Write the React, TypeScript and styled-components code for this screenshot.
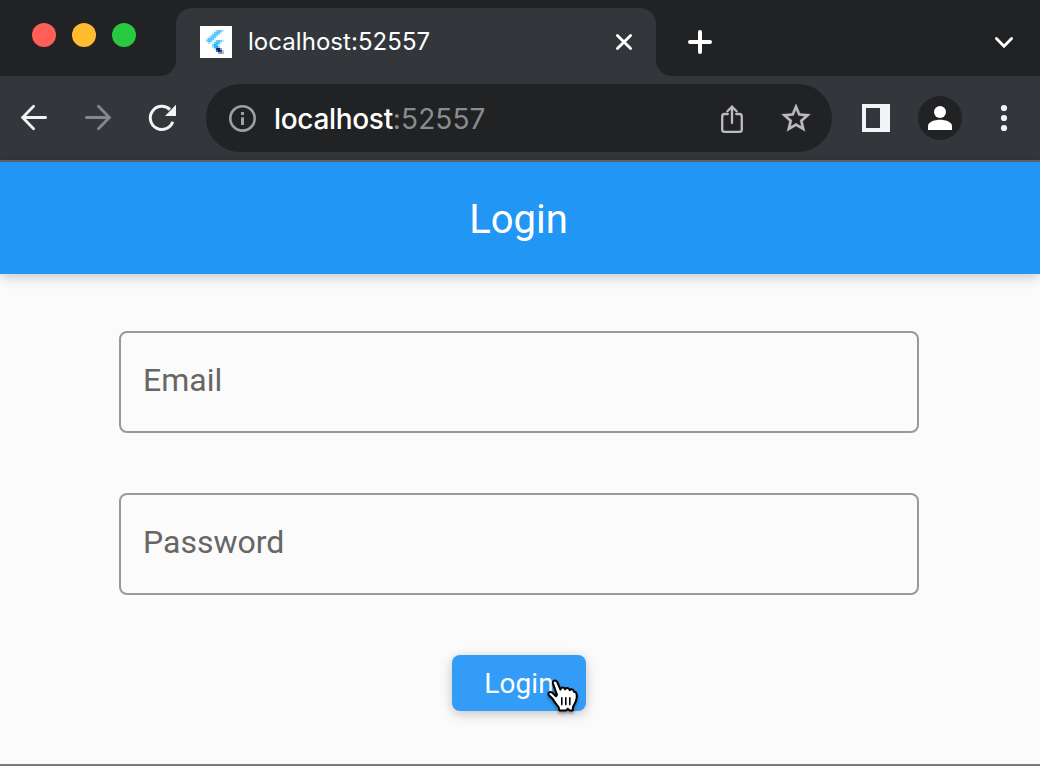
import React from 'react';
import styled, { createGlobalStyle } from 'styled-components';

const GlobalStyle = createGlobalStyle`
  * { box-sizing: border-box; }
  html, body { margin: 0; padding: 0; overflow: hidden; }
  body { background: #fbfbfb; }
`;

const Window = styled.div`
  width: 1040px;
  height: 766px;
  display: flex;
  flex-direction: column;
  overflow: hidden;
  background: #fbfbfb;
  border-bottom: 2px solid #7a7a7a;
`;

const TabStrip = styled.header`
  height: 76px;
  flex: none;
  display: flex;
  align-items: flex-start;
  background: #212224;
`;

const TrafficLights = styled.div`
  width: 160px;
  padding: 23px 0 0 32px;
  display: flex;
  gap: 16px;
`;

const Light = styled.span<{ $color: string }>`
  width: 24px;
  height: 24px;
  border-radius: 50%;
  background: ${(p) => p.$color};
`;

const TabFlare = styled.span<{ $side: 'left' | 'right' }>`
  width: 16px;
  height: 16px;
  align-self: flex-end;
  background: radial-gradient(
    circle at ${(p) => (p.$side === 'left' ? '0 0' : '100% 0')},
    #212224 15.5px,
    #33363a 16.5px
  );
`;

const Tab = styled.div`
  width: 480px;
  height: 68px;
  margin-top: 8px;
  padding: 0 20px 0 24px;
  display: flex;
  align-items: center;
  border-radius: 16px 16px 0 0;
  background: #33363a;
`;

const TabTitle = styled.span`
  flex: 1;
  margin-left: 16px;
  font: 400 24px/32px Inter, sans-serif;
  letter-spacing: 0.05px;
  color: #fff;
`;

const NewTab = styled.div`
  flex: 1;
  padding: 30px 0 0 16px;
`;

const TabSearch = styled.div`
  padding: 30px 24px 0 0;
`;

const Toolbar = styled.div`
  height: 86px;
  flex: none;
  display: flex;
  align-items: center;
  padding: 0 20px 0 16px;
  background: #33363a;
  border-bottom: 2px solid #646464;
`;

const NavButtons = styled.div`
  width: 190px;
  display: flex;
  gap: 28px;
`;

const AddressBar = styled.div`
  width: 626px;
  height: 68px;
  padding: 0 20px;
  display: flex;
  align-items: center;
  border-radius: 34px;
  background: #212224;
`;

const Url = styled.span`
  flex: 1;
  margin: 1px 0 0 16px;
  font: 500 28px/36px Inter, sans-serif;
  letter-spacing: -0.32px;
  color: #fff;
`;

const Port = styled.span`
  font-weight: 400;
  letter-spacing: 0.1px;
  color: #8b8c8e;
`;

const AddressActions = styled.div`
  display: flex;
  gap: 32px;
`;

const ToolbarActions = styled.div`
  flex: 1;
  display: flex;
  align-items: center;
  justify-content: space-between;
  padding-left: 28px;
`;

const Avatar = styled.div`
  width: 44px;
  height: 44px;
  margin: 0 14px;
  display: grid;
  place-items: center;
  border-radius: 50%;
  background: #212224;
`;

const Icon = styled.svg`
  display: block;
  flex: none;
  fill: none;
`;

const AppBar = styled.div`
  height: 112px;
  flex: none;
  display: flex;
  align-items: center;
  justify-content: center;
  background: #2196f5;
  box-shadow: 0 2px 10px rgba(0, 0, 0, 0.12), 0 4px 14px rgba(0, 0, 0, 0.1);
`;

const AppTitle = styled.h1`
  margin: 4px 3px 0 0;
  font: 400 40px/48px Roboto, sans-serif;
  letter-spacing: 0;
  color: #fff;
`;

const Form = styled.form`
  flex: 1;
  display: flex;
  flex-direction: column;
  align-items: center;
  gap: 60px;
  padding: 57px 2px 0 0;
`;

const Field = styled.label`
  width: 800px;
  height: 102px;
  padding: 0 22px;
  display: flex;
  align-items: center;
  border: 2px solid #999;
  border-radius: 8px;
  font: 400 32px/40px Roboto, sans-serif;
  letter-spacing: 0;
  color: #666;
`;

const FieldText = styled.span`
  margin-bottom: 4px;
`;

const SubmitButton = styled.button`
  position: relative;
  width: 134px;
  height: 56px;
  padding: 1px 0 0;
  border: 0;
  border-radius: 8px;
  background: #339cf6;
  color: #fff;
  font: 400 28px/56px Roboto, sans-serif;
  letter-spacing: 0.1px;
  box-shadow: 0 2px 10px rgba(0, 0, 0, 0.14), 0 4px 16px rgba(0, 0, 0, 0.1);
`;

const Pointer = styled(Icon)`
  position: absolute;
  left: 92px;
  top: 19px;
  filter: drop-shadow(0 2px 1.5px rgba(0, 0, 0, 0.35));
`;

/* 16x16 favicon: [row, first column, colours of consecutive cells] */
const faviconCells: [number, number, string[]][] = [
  [2, 7, ['#d8f1fd', '#84d4fa', '#54c5f8', '#6bcdf9', '#c8ecfd']],
  [3, 6, ['#d8f1fd', '#6bcdf9', '#54c5f8', '#54c5f8', '#c8ecfd']],
  [4, 5, ['#d8f1fd', '#6bcdf9', '#54c5f8', '#6bcdf9', '#d8f1fd']],
  [5, 4, ['#d8f1fd', '#6bcdf9', '#54c5f8', '#6bcdf9', '#d8f1fd']],
  [6, 3, ['#b4e5fc', '#54c5f8', '#54c5f8', '#6bcdf9', '#d8f1fd']],
  [7, 3, ['#84d4fa', '#54c5f8', '#6bcdf9', '#d8f1fd', '#d8f1fd', '#6bcdf9', '#54c5f8', '#6bcdf9', '#c8ecfd']],
  [8, 4, ['#a9e0fb', '#d8f1fd', '#e8f7fe', '#6bcdf9', '#42bff6', '#54c5f8', '#d8f1fd']],
  [9, 6, ['#84d4fa', '#29b6f6', '#42bff6', '#c8ecfd']],
  [10, 6, ['#a9e0fb', '#29b6f6', '#29a6e0', '#a8cfe8']],
  [11, 7, ['#a9e0fb', '#063a7c', '#02216b', '#8da2c4']],
  [12, 8, ['#506d9f', '#02206a', '#2a4580', '#c3cbdb']],
  [13, 9, ['#a3adc0', '#7f90b2', '#b0bacd']],
];

const Favicon = () => (
  <Icon width="32" height="32" viewBox="0 0 16 16" shapeRendering="crispEdges">
    <rect width="16" height="16" fill="#fff" />
    {faviconCells.map(([row, start, colors]) =>
      colors.map((c, i) => (
        <rect key={`${row}-${i}`} x={start + i} y={row} width="1" height="1" fill={c} />
      ))
    )}
  </Icon>
);

const BackIcon = () => (
  <Icon width="36" height="36" stroke="#f1f3f4" strokeWidth="2.8">
    <path d="M17.6 6.2 6.6 17.5 17.6 28.8M7 17.5H29.6" strokeLinecap="round" />
  </Icon>
);

const ForwardIcon = () => (
  <Icon width="36" height="36" stroke="#85878a" strokeWidth="2.8">
    <path d="M18.4 6.2 29.4 17.5 18.4 28.8M29 17.5H6.4" strokeLinecap="round" />
  </Icon>
);

const ReloadIcon = () => (
  <Icon width="36" height="36">
    <path d="M26 9.6A11.6 11.6 0 1 0 28.8 21.8" stroke="#f1f3f4" strokeWidth="3" />
    <path d="M32 4.8V16H21Z" fill="#f1f3f4" />
  </Icon>
);

const InfoIcon = () => (
  <Icon width="32" height="32">
    <circle cx="16.5" cy="16.4" r="12.2" stroke="#9aa0a6" strokeWidth="2.6" />
    <path d="M15 10h3v3h-3zM15 15.2h3V23h-3z" fill="#9aa0a6" />
  </Icon>
);

const ShareIcon = () => (
  <Icon width="32" height="32" stroke="#bdbdbf" strokeWidth="2.3" strokeLinecap="round">
    <path d="M11.8 12H8.6Q6.2 12 6.2 14.4V27.4Q6.2 29.8 8.6 29.8H23.4Q25.8 29.8 25.8 27.4V14.4Q25.8 12 23.4 12H20.2" />
    <path d="M16 21V4.5M11.4 9.2 16 4.6 20.6 9.2" />
  </Icon>
);

const StarIcon = () => (
  <Icon width="32" height="32">
    <path
      transform="translate(-1.4 -1.1) scale(1.45)"
      fill="#bdbdbf"
      stroke="#bdbdbf"
      strokeWidth="0.25"
      d="M22 9.24l-7.19-.62L12 2 9.19 8.63 2 9.24l5.46 4.73L5.82 21 12 17.27 18.18 21l-1.63-7.03L22 9.24zM12 15.4l-3.76 2.27 1-4.28-3.32-2.88 4.38-.38L12 6.1l1.71 4.04 4.38.38-3.32 2.88 1 4.28L12 15.4z"
    />
  </Icon>
);

const SidePanelIcon = () => (
  <Icon width="32" height="32">
    <path fillRule="evenodd" fill="#f1f3f4" d="M2 2H30V30H2ZM6 6V26H20V6Z" />
  </Icon>
);

const PersonIcon = () => (
  <Icon width="32" height="32">
    <circle cx="16" cy="10" r="6" fill="#fff" />
    <path d="M4 28V24C4 19.8 11 17.8 16 17.8S28 19.8 28 24V28Z" fill="#fff" />
  </Icon>
);

const MenuIcon = () => (
  <Icon width="32" height="32">
    {[6, 16, 26].map((y) => (
      <circle key={y} cx="16" cy={y} r="3.1" fill="#f1f3f4" />
    ))}
  </Icon>
);

const CloseIcon = () => (
  <Icon width="24" height="24" stroke="#fff" strokeWidth="2.8" strokeLinecap="round">
    <path d="M5.4 5.4 18.6 18.6M18.6 5.4 5.4 18.6" />
  </Icon>
);

const PlusIcon = () => (
  <Icon width="24" height="24" stroke="#fff" strokeWidth="4" strokeLinecap="round">
    <path d="M12 2V22M2 12H22" />
  </Icon>
);

const ChevronIcon = () => (
  <Icon width="24" height="24" stroke="#fff" strokeWidth="2.8" strokeLinecap="round">
    <path d="M4.4 8.6 12 16.2 19.6 8.6" />
  </Icon>
);

const HandPointer = () => (
  <Pointer width="38" height="42" strokeLinejoin="round" strokeLinecap="round">
    <path
      d="M13 20.8 9 9.6C8.2 6.6 11.6 5.2 13.2 8L16.5 15.6C17 13 20 12.8 21 15.4 22 13.2 25 13.4 25.8 16.2 27 14.6 29.5 15 30 17.8 32.5 17.6 33.2 20.5 32.6 24.4 32 28.6 30.2 30.4 29 33L28.7 36.4H25.6L23.8 34.8 22 36.4H15.3L14.6 33C12.3 30 10.4 28.4 8.6 24.8L5.2 21.6C3.2 19.2 5.8 17 8.2 18.6L12 22.2Z"
      fill="#fff"
      stroke="#000"
      strokeWidth="2"
    />
    <path d="M17.8 23.8V30.6M21.8 23.8V30.6M25.8 23.8V30.6" stroke="#000" strokeWidth="1.6" />
  </Pointer>
);

export default function App() {
  return (
    <>
      <GlobalStyle />
      <Window>
        <TabStrip>
          <TrafficLights>
            <Light $color="#ff5f57" />
            <Light $color="#febc2e" />
            <Light $color="#28c840" />
          </TrafficLights>
          <TabFlare $side="left" />
          <Tab>
            <Favicon />
            <TabTitle>localhost:52557</TabTitle>
            <CloseIcon />
          </Tab>
          <TabFlare $side="right" />
          <NewTab>
            <PlusIcon />
          </NewTab>
          <TabSearch>
            <ChevronIcon />
          </TabSearch>
        </TabStrip>
        <Toolbar>
          <NavButtons>
            <BackIcon />
            <ForwardIcon />
            <ReloadIcon />
          </NavButtons>
          <AddressBar>
            <InfoIcon />
            <Url>
              localhost<Port>:52557</Port>
            </Url>
            <AddressActions>
              <ShareIcon />
              <StarIcon />
            </AddressActions>
          </AddressBar>
          <ToolbarActions>
            <SidePanelIcon />
            <Avatar>
              <PersonIcon />
            </Avatar>
            <MenuIcon />
          </ToolbarActions>
        </Toolbar>
        <AppBar>
          <AppTitle>Login</AppTitle>
        </AppBar>
        <Form>
          <Field>
            <FieldText>Email</FieldText>
          </Field>
          <Field>
            <FieldText>Password</FieldText>
          </Field>
          <SubmitButton type="button">
            Login
            <HandPointer />
          </SubmitButton>
        </Form>
      </Window>
    </>
  );
}
